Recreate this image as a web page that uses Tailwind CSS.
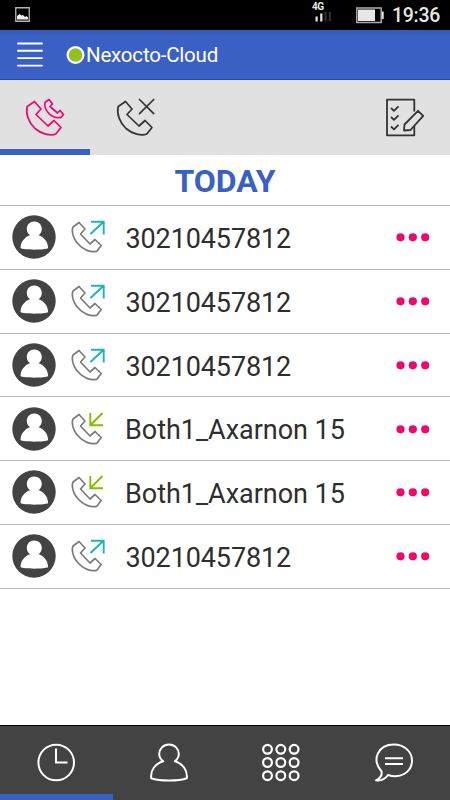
<!DOCTYPE html>
<html lang="en">
<head>
<meta charset="utf-8">
<title>Nexocto-Cloud</title>
<script src="https://cdn.jsdelivr.net/npm/@tailwindcss/browser@4"></script>
</head>
<body class="w-[450px] h-[800px] overflow-hidden bg-white font-['Roboto',sans-serif]">
<svg class="hidden">
  <symbol id="phone" viewBox="0 0 38 38"><path d="M9.500 1.500 16 9l-5 5.500L23 26l6-5.500 7 7-5.200 6.500c-5.500 2-14.500 0-20.800-5.500C3.500 22.500.5 13.500 2.200 6.500Z" fill="none" stroke="currentColor" stroke-linejoin="round"/></symbol>
  <symbol id="avatar" viewBox="0 0 44 44"><circle cx="22" cy="22" r="21.700" fill="#434343"/><path d="M22.300 6.500c-4.300 0-7.500 3.200-7.500 7.200 0 2.700 1.200 5 3.200 6.500C12.700 22 8.700 26.500 8.500 33c3 2.200 24.600 2.200 27.600 0-.2-6.500-4.200-11-9.500-12.800 2-1.500 3.200-3.800 3.200-6.500 0-4-3.200-7.200-7.500-7.200Z" fill="#fff"/></symbol>
  <symbol id="call" viewBox="0 0 36 36"><path d="M9 3.500 15 10l-4.500 5L20 25l5-4.500 6.200 6-4.400 5.800C16.500 34.500 2 24 2.300 10.500l.7-2.500Z" fill="none" stroke="#7c7c7c" stroke-width="1.700" stroke-linejoin="round"/></symbol>
  <symbol id="out" viewBox="0 0 36 36"><use href="#call" width="36" height="36"/><path d="M20.500 15 33.500 2.700M21 2.700h12.700V15.500" fill="none" stroke="#1fb1bd" stroke-width="1.900"/></symbol>
  <symbol id="in" viewBox="0 0 36 36"><use href="#call" width="36" height="36"/><path d="M32.500 2 20.500 14M20.300 2v12.300H33" fill="none" stroke="#86bc00" stroke-width="1.900"/></symbol>
  <symbol id="more" viewBox="0 0 34 10"><g fill="#ee086c"><circle cx="4.500" cy="5.300" r="4.100"/><circle cx="16.800" cy="5.300" r="4.100"/><circle cx="29.200" cy="5.300" r="4.100"/></g></symbol>
</svg>
<div class="flex h-[800px] flex-col">
  <div class="flex h-[30px] shrink-0 items-center bg-black text-[#e6e6e6]">
    <svg class="ml-[15px] h-4 w-4" viewBox="0 0 16 16"><path d="M.750.750h13.500v13.500H.750Z" fill="none" stroke="#b5b5b5" stroke-width="1.300"/><path d="M2 12.500V9l2.500-2 2 1.500L8 8l2 2 1.500-1 1.500 1.500v2Z" fill="#eee"/></svg>
    <div class="ml-[281px] flex h-[30px] w-[20px] flex-col">
      <span class="mt-[1px] h-[11px] text-[10px] leading-[11px] font-bold tracking-[-0.600px]">4G</span>
      <svg class="ml-[3px] h-[14px] w-[17px]" viewBox="0 0 17 14"><path d="M.5 4.500h2.200v5H.5Zm4.700-3h2.200v8H5.200Z" fill="#e6e6e6"/><path d="M9.500 0h2V9.500h-2ZM13.800 0h2V9.500h-2ZM9.500-3h2v3h-2ZM13.800-3h2v3h-2Z" fill="#303030"/></svg>
    </div>
    <svg class="ml-[24px] h-[17px] w-[28px]" viewBox="0 0 28 17"><path d="M.800 1h24.400v14.500H.800Z" fill="#000" stroke="#aaa" stroke-width="1.500"/><path d="M2 2.500h17V14H2ZM26 4.500h1.700v7.500H26Z" fill="#e6e6e6"/></svg>
    <span class="ml-[8px] pt-px text-[19.500px] leading-[30px] font-medium tracking-[-0.300px]">19:36</span>
  </div>
  <header class="flex h-[50px] shrink-0 items-center border-b border-[#124bb3] bg-[#3b60c4] bg-linear-to-b from-[#3659b5] from-0% to-[#3b60c4] to-15% text-white">
    <svg class="ml-[17px] h-[27px] w-[26px]" viewBox="0 0 26 27"><path d="M1 2.500h24M1 9.800h24M1 17.100h24M1 24.600h24" stroke="#fff" stroke-width="1.900" stroke-linecap="round"/></svg>
    <svg class="ml-[23px] h-5 w-5" viewBox="0 0 20 20"><circle cx="9.500" cy="10" r="7.900" fill="#93c01f" stroke="#fff" stroke-width="2.200"/></svg>
    <h1 class="pt-px text-[20.500px] leading-[28px] tracking-[-0.200px]">Nexocto-Cloud</h1>
  </header>
  <nav class="flex h-[75px] shrink-0 justify-between bg-[#e1e1e1] text-[#333]">
    <div class="flex">
      <div class="w-[90px] border-b-[6px] border-[#3b60c4] text-[#ee086c]">
        <svg class="mt-[18px] ml-[25px] h-[42px] w-[42px]" viewBox="0 0 42 42"><use href="#phone" y="2" width="38" height="38" stroke-width="1.700"/><path d="M24 1.500 27.500 6 25 8.500l7.500 6.500 2.500-2.500 3.500 4-2.500 3c-9 1.500-17.500-7-16-15Z" fill="none" stroke="currentColor" stroke-width="1.700" stroke-linejoin="round"/></svg>
      </div>
      <svg class="mt-[18px] ml-[25.500px] h-[42px] w-[42px]" viewBox="0 0 42 42"><use href="#phone" y="2" width="38" height="38" stroke-width="1.700"/><path d="m23.500 1.500 14.200 14.200m0-14.200L23.500 15.700" fill="none" stroke="currentColor" stroke-width="1.700" stroke-linecap="round"/></svg>
    </div>
    <svg class="mt-[18px] mr-[25px] h-[42px] w-[40px]" viewBox="0 0 40 42" fill="none" stroke="#333" stroke-width="1.800" stroke-linejoin="round"><path d="M29.300 13.500V1.700H2v35.600h27.300V28"/><path d="m6 10 3 2.800 4.500-4.500M6 19l3 2.800 4.500-4.500M6 28.500l3 2.800 4.500-4.500M33 12.800l5.200 5L25.500 32l-6.500.500.500-6Z"/></svg>
  </nav>
  <main class="flex grow flex-col text-[27px] text-[#2e2e2e]">
    <h2 class="flex h-[51px] shrink-0 items-center justify-center border-b border-[#b8b8b8] pt-[2px] text-[32px] font-bold text-[#3b60c4]">TODAY</h2>
    <div class="flex h-[63.750px] items-center border-b border-[#b8b8b8]"><svg class="ml-3 h-11 w-11"><use href="#avatar"/></svg><svg class="ml-[14px] h-9 w-9"><use href="#out"/></svg><span class="ml-[19.500px] grow pt-[4px] tracking-[-0.120px]">30210457812</span><svg class="mr-5 h-[10px] w-[34px]"><use href="#more"/></svg></div>
    <div class="flex h-[63.750px] items-center border-b border-[#b8b8b8]"><svg class="ml-3 h-11 w-11"><use href="#avatar"/></svg><svg class="ml-[14px] h-9 w-9"><use href="#out"/></svg><span class="ml-[19.500px] grow pt-[4px] tracking-[-0.120px]">30210457812</span><svg class="mr-5 h-[10px] w-[34px]"><use href="#more"/></svg></div>
    <div class="flex h-[63.750px] items-center border-b border-[#b8b8b8]"><svg class="ml-3 h-11 w-11"><use href="#avatar"/></svg><svg class="ml-[14px] h-9 w-9"><use href="#out"/></svg><span class="ml-[19.500px] grow pt-[4px] tracking-[-0.120px]">30210457812</span><svg class="mr-5 h-[10px] w-[34px]"><use href="#more"/></svg></div>
    <div class="flex h-[63.750px] items-center border-b border-[#b8b8b8]"><svg class="ml-3 h-11 w-11"><use href="#avatar"/></svg><svg class="ml-[14px] h-9 w-9"><use href="#in"/></svg><span class="ml-[19px] grow pt-[4px] tracking-[-0.030px]">Both1_Axarnon 15</span><svg class="mr-5 h-[10px] w-[34px]"><use href="#more"/></svg></div>
    <div class="flex h-[63.750px] items-center border-b border-[#b8b8b8]"><svg class="ml-3 h-11 w-11"><use href="#avatar"/></svg><svg class="ml-[14px] h-9 w-9"><use href="#in"/></svg><span class="ml-[19px] grow pt-[4px] tracking-[-0.030px]">Both1_Axarnon 15</span><svg class="mr-5 h-[10px] w-[34px]"><use href="#more"/></svg></div>
    <div class="flex h-[63.750px] items-center border-b border-[#b8b8b8]"><svg class="ml-3 h-11 w-11"><use href="#avatar"/></svg><svg class="ml-[14px] h-9 w-9"><use href="#out"/></svg><span class="ml-[19.500px] grow pt-[4px] tracking-[-0.120px]">30210457812</span><svg class="mr-5 h-[10px] w-[34px]"><use href="#more"/></svg></div>
  </main>
  <footer class="grid h-[75px] shrink-0 grid-cols-4 border-t border-black bg-[#434343]">
    <div class="flex justify-center border-b-[6px] border-[#3b60c4] pt-[16px]"><svg class="h-10 w-10" viewBox="0 0 40 40" fill="none" stroke="#fff" stroke-width="2"><circle cx="20.200" cy="20.500" r="17.800"/><path d="M20 6.500v14h11.500"/></svg></div>
    <div class="flex justify-center pt-[16px]"><svg class="h-10 w-10" viewBox="0 0 40 40" fill="none" stroke="#fff" stroke-width="2" stroke-linejoin="round"><path d="M20 2.500c-5.800 0-9.800 4.500-9.800 9.500 0 3 1.500 5.500 4 7.300C6.500 21.500 1.200 28 2.200 36.200c8 3 27.600 3 35.600 0 1-8.200-4.300-14.700-12-16.900 2.500-1.800 4-4.300 4-7.300 0-5-4-9.500-9.800-9.500Z"/></svg></div>
    <div class="flex justify-center pt-[16px]"><svg class="h-10 w-10" viewBox="0 0 40 40" fill="none" stroke="#fff" stroke-width="2.200"><circle cx="6.500" cy="7.300" r="4.400"/><circle cx="19.800" cy="7.300" r="4.400"/><circle cx="33.100" cy="7.300" r="4.400"/><circle cx="6.500" cy="20.500" r="4.400"/><circle cx="19.800" cy="20.500" r="4.400"/><circle cx="33.100" cy="20.500" r="4.400"/><circle cx="6.500" cy="33.700" r="4.400"/><circle cx="19.800" cy="33.700" r="4.400"/><circle cx="33.100" cy="33.700" r="4.400"/></svg></div>
    <div class="flex justify-center pt-[16px]"><svg class="h-10 w-10" viewBox="0 0 40 40" fill="none" stroke="#fff" stroke-width="2" stroke-linejoin="round"><path d="M7.500 29.500C-2.500 18 3.500 2.500 20 2.500c10 0 18 7 18 16 0 12-12 18.500-24 14.500-3 4-7 6.300-12 5.300 3.500-1.800 6.500-4.800 5.500-8.800Z"/><path d="M11 16.300h18M11 22h18"/></svg></div>
  </footer>
</div>
</body>
</html>
